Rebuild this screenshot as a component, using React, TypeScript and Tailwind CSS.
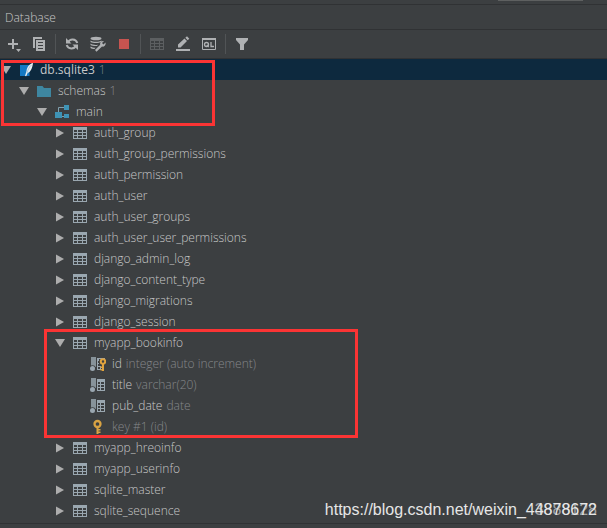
import { useState } from 'react'

type Kind = 'database' | 'folder' | 'schema' | 'table' | 'column' | 'pkColumn' | 'key'

type Item = {
  level: number
  kind: Kind
  label: string
  note?: string
  open?: boolean
  muted?: boolean
}

const ROOT: Item[] = [
  { level: 0, kind: 'database', label: 'db.sqlite3', note: '1', open: true },
  { level: 1, kind: 'folder', label: 'schemas', note: '1', open: true },
  { level: 2, kind: 'schema', label: 'main', open: true },
]

const table = (label: string): Item => ({ level: 3, kind: 'table', label, open: false })

const DJANGO_TABLES: Item[] = [
  'auth_group',
  'auth_group_permissions',
  'auth_permission',
  'auth_user',
  'auth_user_groups',
  'auth_user_user_permissions',
  'django_admin_log',
  'django_content_type',
  'django_migrations',
  'django_session',
].map(table)

const BOOKINFO: Item[] = [
  { level: 3, kind: 'table', label: 'myapp_bookinfo', open: true },
  { level: 4, kind: 'pkColumn', label: 'id', note: 'integer (auto increment)' },
  { level: 4, kind: 'column', label: 'title', note: 'varchar(20)' },
  { level: 4, kind: 'column', label: 'pub_date', note: 'date' },
  { level: 4, kind: 'key', label: 'key #1 (id)', muted: true },
]

const OTHER_TABLES: Item[] = ['myapp_hreoinfo', 'myapp_userinfo', 'sqlite_master', 'sqlite_sequence'].map(table)

const INDENT = ['pl-0', 'pl-[18px]', 'pl-9', 'pl-[54px]', 'pl-[72px]']

function TableGrid({ color }: { color: string }) {
  return (
    <svg viewBox="0 0 16 16" className="size-4" shapeRendering="crispEdges" fill={color} aria-hidden="true">
      <path fillRule="evenodd" d="M1 2h14v12H1zM2 5v2h3V5zM6 5v2h4V5zM11 5v2h3V5zM2 8v2h3V8zM6 8v2h4V8zM11 8v2h3V8zM2 11v2h3v-2zM6 11v2h4v-2zM11 11v2h3v-2z" />
    </svg>
  )
}

function KindIcon({ kind }: { kind: Kind }) {
  if (kind === 'table') return <TableGrid color="#9aa7b0" />
  return (
    <svg viewBox="0 0 16 16" className="size-4" aria-hidden="true">
      {kind === 'database' && (
        <>
          <path d="M2 3h9.500v11H2z" fill="#1479c4" />
          <path d="M15 1c-3.500.5-6 4-6.500 8l-1.500 5 1.200.3 1.300-3c3.500-1.500 5-5.800 5.500-10.300z" fill="#e8eef2" />
          <path d="M13.500 3c-2.500 2-3.500 5-4.500 8" stroke="#8fb9d4" strokeWidth=".7" fill="none" />
        </>
      )}
      {kind === 'folder' && <path d="M1 3h5.500l1.500 2h7v9H1z" fill="#3e86a0" />}
      {kind === 'schema' && (
        <>
          <path d="M10 1h5v5h-5zM1 8h7v6H1zM10 10h5v4h-5z" fill="#3e93b5" />
          <path d="M4.500 8V3.500H10M8 12.500h2" stroke="#7f9fae" fill="none" />
        </>
      )}
      {(kind === 'column' || kind === 'pkColumn') && (
        <>
          <path d="M1 1h5v10H1z" fill="#87939a" />
          <path fillRule="evenodd" d="M7 2h8v12H7zM8 5v2h2V5zM11 5v2h3V5zM8 8v2h2V8zM11 8v2h3V8zM8 11v2h2v-2zM11 11v2h3v-2z" fill="#9aa7b0" shapeRendering="crispEdges" />
          <circle cx="2.500" cy="12.500" r="3.200" fill="#3c3f41" />
          <circle cx="2.500" cy="12.500" r="2.500" fill="#9aa7b0" />
        </>
      )}
      {kind === 'pkColumn' && (
        <>
          <path d="M9 3h7v13h-5v-6H9z" fill="#3c3f41" />
          <circle cx="13" cy="5.500" r="2.200" stroke="#e0a33e" strokeWidth="2" fill="none" />
          <path d="M12 7.500h2V15h-2zM10.500 10.500H12v1.500h-1.500zM10.500 13H12v1.500h-1.500z" fill="#e0a33e" />
        </>
      )}
      {kind === 'key' && (
        <>
          <circle cx="7.500" cy="5" r="3" stroke="#d9a343" strokeWidth="2.300" fill="none" />
          <path d="M6.500 8h2v7h-2zM8 10h2.500v1.500H8zM8 12.500h2.500V14H8z" fill="#d9a343" />
        </>
      )}
    </svg>
  )
}

function Row({ item, selected, onSelect }: { item: Item; selected: boolean; onSelect: () => void }) {
  return (
    <li role="treeitem" aria-level={item.level + 1} aria-expanded={item.open} aria-selected={selected}>
      <button
        type="button"
        onClick={onSelect}
        className={`flex h-[21px] w-full items-center text-left ${INDENT[item.level]} ${selected ? 'bg-[#0d293e]' : ''}`}
      >
        <span className="w-[18px] shrink-0 pl-px">
          {item.open !== undefined && (
            <svg viewBox="0 0 10 10" className="size-2.5" fill="#adadad" aria-hidden="true">
              <path d={item.open ? 'M0 1h10L5 9z' : 'M1 .5v9L9 5z'} />
            </svg>
          )}
        </span>
        <span className="mr-1.5 shrink-0"><KindIcon kind={item.kind} /></span>
        <span className={`flex gap-1 whitespace-nowrap ${item.muted ? 'text-[#85878a]' : ''}`}>
          <span className={item.kind === 'database' ? 'font-normal' : ''}>{item.label}</span>
          {item.note && <span className="text-[#85878a]">{item.note}</span>}
        </span>
      </button>
    </li>
  )
}

function ToolButton({ label, children }: { label: string; children: React.ReactNode }) {
  return (
    <button type="button" aria-label={label} title={label} className="size-4 hover:brightness-125">
      {children}
    </button>
  )
}

function ToolGroup({ children }: { children: React.ReactNode }) {
  return <div className="flex gap-2.5">{children}</div>
}

function Separator() {
  return <span className="h-5 w-px bg-[#515456]" />
}

function Toolbar() {
  return (
    <div className="flex h-[29px] items-center gap-2 border-b border-[#303234] px-[5px] text-[#afb1b3]">
      <ToolGroup>
        <ToolButton label="New">
          <svg viewBox="0 0 16 16" fill="currentColor">
            <path d="M7 3h2v4h4v2H9v4H7V9H3V7h4zM11 13h5l-2.500 3z" />
          </svg>
        </ToolButton>
        <ToolButton label="Duplicate">
          <svg viewBox="0 0 16 16" fill="currentColor">
            <path fillRule="evenodd" d="M2 1h9v2H4v9H2zM5 4h9v11H5zM7 6v1h5V6zM7 9v1h5V9zM7 12v1h5v-1z" />
          </svg>
        </ToolButton>
      </ToolGroup>
      <Separator />
      <ToolGroup>
        <ToolButton label="Refresh">
          <svg viewBox="0 0 16 16" fill="none" stroke="currentColor" strokeWidth="2">
            <path d="M4 6.500a5 5 0 0 1 9.300.500M12 9.500a5 5 0 0 1-9.300-.500" />
            <path d="M2 2v5.500h5.500zM14 14V8.500H8.500z" fill="currentColor" stroke="none" />
          </svg>
        </ToolButton>
        <ToolButton label="Data source properties">
          <svg viewBox="0 0 16 16" fill="currentColor">
            <ellipse cx="6" cy="2.500" rx="5.500" ry="1.800" />
            <path d="M.5 4.500c2 1.800 9 1.800 11 0v1.300C9 7.500 3 7.500.500 6zM.5 7.500c2 1.500 5 1.600 7.500 1.200L7 10C4 10.200 2 9.800.500 9zM.5 10.500c1.500 1 3 1.200 5 1.200L4.500 13C3 13 1.500 12.700.500 12z" />
            <path d="M15.500 6.500 13.500 8.500 12 7l2-2c-2.500-.5-4.500 1.500-3.800 3.800L5 14l1.500 1.700 5.500-5.200c2 .7 4.200-1.500 3.500-4z" />
          </svg>
        </ToolButton>
        <ToolButton label="Stop">
          <svg viewBox="0 0 16 16"><path d="M3 3h10v10H3z" fill="#c75450" /></svg>
        </ToolButton>
      </ToolGroup>
      <Separator />
      <ToolGroup>
        <ToolButton label="Open table"><TableGrid color="#5c5f61" /></ToolButton>
        <ToolButton label="Edit">
          <svg viewBox="0 0 16 16" fill="currentColor">
            <path d="M1 13h14v2H1zM3 8.500 9.500 2.500l2.500 2.500L5.500 11.500H3zM10.300 1.700 12 .3 14.300 2.700 12.700 4.200z" />
          </svg>
        </ToolButton>
        <ToolButton label="Open query console">
          <svg viewBox="0 0 16 16" fill="none" stroke="currentColor">
            <path d="M1.500 2.500h13v11h-13z" />
            <path d="M1 2h14v2H1z" fill="currentColor" stroke="none" />
            <circle cx="5.500" cy="8.500" r="2" strokeWidth="1.300" />
            <path d="M5.800 9l1.900 2M10 6v4.500h3" strokeWidth="1.300" />
          </svg>
        </ToolButton>
      </ToolGroup>
      <Separator />
      <ToolButton label="Filter">
        <svg viewBox="0 0 16 16" fill="currentColor"><path d="M2 2h12v2L10 8.500V14H6V8.500L2 4z" /></svg>
      </ToolButton>
    </div>
  )
}

export default function App() {
  const [selected, setSelected] = useState('db.sqlite3')

  const renderRows = (items: Item[]) =>
    items.map((item) => (
      <Row
        key={item.label}
        item={item}
        selected={selected === item.label}
        onSelect={() => setSelected(item.label)}
      />
    ))

  return (
    <main className="relative min-h-screen overflow-hidden bg-[#3c3f41] font-['Open_Sans','Noto_Sans',sans-serif] text-[12px] leading-4 font-light text-[#c8c8c8]">
      <div className="flex h-[5px] items-start justify-end border-b border-[#303234] pr-6">
        <span className="h-px w-[85px] bg-[#5e6060]" />
      </div>
      <h1 className="flex h-[25px] items-center border-b border-[#303234] px-[5px] pt-px">Database</h1>
      <Toolbar />

      <ul role="tree" aria-label="Database">
        <li role="none" className="relative">
          <ul role="group">{renderRows(ROOT)}</ul>
          <span className="pointer-events-none absolute top-px -bottom-1 left-px w-[214px] border-3 border-[#fb3434]" />
        </li>
        {renderRows(DJANGO_TABLES)}
        <li role="none" className="relative">
          <ul role="group">{renderRows(BOOKINFO)}</ul>
          <span className="pointer-events-none absolute -top-[3px] -bottom-px left-11 w-[314px] border-3 border-[#fb3434]" />
        </li>
        {renderRows(OTHER_TABLES)}
      </ul>
      <div className="mt-0.5 border-t border-[#303234]" />

      <p className="pointer-events-none absolute right-2.5 bottom-2 font-['Liberation_Sans',sans-serif] text-[16px] leading-5 font-normal text-[#e6e6e6]">
        https://blog.csdn.net/weixin_44878672
        <span className="absolute right-0 text-[#e6e6e6]/60">3888128</span>
      </p>
    </main>
  )
}
